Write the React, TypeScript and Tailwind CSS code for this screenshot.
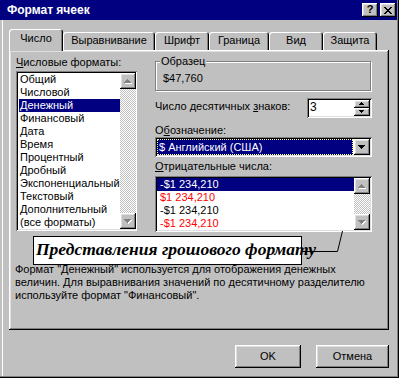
import React from 'react';

const raised = 'shadow-[inset_-1px_-1px_#000,inset_1px_1px_#fff,inset_-2px_-2px_#808080,inset_2px_2px_#dfdfdf]';
const sunken = 'shadow-[inset_1px_1px_#808080,inset_-1px_-1px_#fff,inset_2px_2px_#000,inset_-2px_-2px_#dfdfdf]';
const checker = 'bg-[image:repeating-conic-gradient(#c0c0c0_0_25%,#fff_0_50%)] bg-[length:2px_2px]';

const formats = [
    'Общий', 'Числовой', 'Денежный', 'Финансовый', 'Дата', 'Время', 'Процентный',
    'Дробный', 'Экспоненциальный', 'Текстовый', 'Дополнительный', '(все форматы)',
];

const negatives = [
    { text: '-$1 234,210', red: false },
    { text: '$1 234,210', red: true },
    { text: '-$1 234,210', red: false },
    { text: '-$1 234,210', red: true },
];

const tabs = [
    { label: 'Число', w: 'w-[54px]', active: true },
    { label: 'Выравнивание', w: 'w-[92px]' },
    { label: 'Шрифт', w: 'w-[54px]' },
    { label: 'Граница', w: 'w-[60px]' },
    { label: 'Вид', w: 'w-[54px]' },
    { label: 'Защита', w: 'w-[54px]' },
];

// pixel triangle, rows 1,3,5,7...
const Arrow = ({ dir, size = 4, disabled }: { dir: 'up' | 'down'; size?: number; disabled?: boolean }) => {
    const w = size * 2 - 1;
    const rows = Array.from({ length: size }, (_, i) => (dir === 'up' ? i : size - 1 - i));
    return (
        <svg width={w + 1} height={size + 1} viewBox={`0 0 ${w + 1} ${size + 1}`} shapeRendering="crispEdges">
            {disabled && rows.map((r, y) => (
                <rect key={'s' + y} x={size - 1 - r + 1} y={y + 1} width={r * 2 + 1} height={1} fill="#fff" />
            ))}
            {rows.map((r, y) => (
                <rect key={y} x={size - 1 - r} y={y} width={r * 2 + 1} height={1} fill={disabled ? '#808080' : '#000'} />
            ))}
        </svg>
    );
};

const ScrollBtn = ({ dir, disabled }: { dir: 'up' | 'down'; disabled?: boolean }) => (
    <div className={`w-[16px] h-[16px] bg-[#c0c0c0] flex items-center justify-center ${raised}`}>
        <Arrow dir={dir} disabled={disabled} />
    </div>
);

const Scrollbar = () => (
    <div className={`w-[16px] h-full flex flex-col ${checker}`}>
        <ScrollBtn dir="up" disabled />
        <div className="flex-1" />
        <ScrollBtn dir="down" disabled />
    </div>
);

const CloseGlyph = () => {
    const px: [number, number][] = [
        [0, 0], [1, 0], [6, 0], [7, 0],
        [1, 1], [2, 1], [5, 1], [6, 1],
        [2, 2], [3, 2], [4, 2], [5, 2],
        [3, 3], [4, 3],
        [2, 4], [3, 4], [4, 4], [5, 4],
        [1, 5], [2, 5], [5, 5], [6, 5],
        [0, 6], [1, 6], [6, 6], [7, 6],
    ];
    return (
        <svg width="8" height="7" viewBox="0 0 8 7" shapeRendering="crispEdges">
            {px.map(([x, y], i) => <rect key={i} x={x} y={y} width={1} height={1} fill="#000" />)}
        </svg>
    );
};

export default function App() {
    return (
        <div className="w-[399px] h-[378px] bg-[#c0c0c0] relative overflow-hidden text-[11px] leading-[13px] text-black font-['Liberation_Sans',Arial,sans-serif] shadow-[inset_-1px_-1px_#000,inset_-2px_-2px_#808080,inset_2px_0_#c0c0c0,inset_3px_0_#fff]">
            {/* title bar */}
            <div className="h-[20px] w-[397px] bg-[#000080] flex items-center pl-[7px] pr-[1px]">
                <span className="text-white font-bold text-[12px]">Формат ячеек</span>
                <div className="ml-auto flex gap-[2px]">
                    <div className={`w-[16px] h-[14px] bg-[#c0c0c0] flex items-center justify-center font-bold text-[11px] leading-none pb-[1px] ${raised}`}>?</div>
                    <div className={`w-[16px] h-[14px] bg-[#c0c0c0] flex items-center justify-center ${raised}`}>
                        <CloseGlyph />
                    </div>
                </div>
            </div>

            {/* tabs */}
            <div className="flex items-end h-[21px] mt-[9px] ml-[9px]">
                {tabs.map(t => (
                    <div
                        key={t.label}
                        className={`${t.w} flex items-center justify-center bg-[#c0c0c0] rounded-t-[3px] shadow-[inset_1px_1px_#fff,inset_-1px_0_#000,inset_-2px_0_#808080] ${t.active ? 'h-[22px] -mb-[1px] relative z-10 pb-[4px]' : 'h-[18px] pb-[1px]'}`}
                    >
                        {t.label}
                    </div>
                ))}
            </div>

            {/* panel */}
            <div className={`ml-[9px] w-[380px] h-[280px] pt-[6px] pl-[7px] ${raised}`}>
                <div className="flex gap-[18px]">
                    <div className="w-[121px]">
                        <div><span className="underline">Ч</span>исловые форматы:</div>
                        <div className={`mt-[2px] h-[160px] bg-white p-[2px] flex ${sunken}`}>
                            <div className="flex-1 pl-[1px]">
                                {formats.map(f => (
                                    <div key={f} className={`h-[13px] pl-[1px] whitespace-nowrap ${f === 'Денежный' ? 'bg-[#000080] text-white' : ''}`}>{f}</div>
                                ))}
                            </div>
                            <Scrollbar />
                        </div>
                    </div>

                    <div className="w-[217px]">
                        <div className="relative mt-[5px] w-[216px] h-[30px] border border-[#808080] shadow-[inset_1px_1px_#fff,1px_1px_#fff] pt-[10px] pl-[7px]">
                            <span className="absolute -top-[7px] left-[4px] px-[1px] bg-[#c0c0c0]">Образец</span>
                            $47,760
                        </div>

                        <div className="mt-[7px] flex justify-between">
                            <div className="mt-[2px]">Число десятичных <span className="underline">з</span>наков:</div>
                            <div className={`w-[65px] h-[20px] bg-white p-[2px] flex ${sunken}`}>
                                <div className="flex-1 pl-[1px] pt-[1px] text-[12px]">3</div>
                                <div className="flex flex-col">
                                    <div className={`w-[16px] h-[8px] bg-[#c0c0c0] flex items-center justify-center ${raised}`}>
                                        <Arrow dir="up" size={3} />
                                    </div>
                                    <div className={`w-[16px] h-[8px] bg-[#c0c0c0] flex items-center justify-center ${raised}`}>
                                        <Arrow dir="down" size={3} />
                                    </div>
                                </div>
                            </div>
                        </div>

                        <div className="mt-[6px]">О<span className="underline">б</span>означение:</div>
                        <div className={`h-[20px] bg-white p-[2px] flex ${sunken}`}>
                            <div className="flex-1 bg-[#000080] text-white border border-dotted border-[#ffff80] pl-[1px] leading-[14px] mr-[1px]">
                                $ Английский (США)
                            </div>
                            <div className={`w-[16px] h-[16px] bg-[#c0c0c0] flex items-center justify-center ${raised}`}>
                                <Arrow dir="down" />
                            </div>
                        </div>

                        <div className="mt-[3px]"><span className="underline">О</span>трицательные числа:</div>
                        <div className={`mt-[3px] h-[56px] bg-white p-[2px] flex ${sunken}`}>
                            <div className="flex-1">
                                {negatives.map((n, i) => (
                                    <div key={i} className={`h-[13px] pl-[3px] ${i === 0 ? 'bg-[#000080] text-white' : n.red ? 'text-[#ff0000]' : ''}`}>{n.text}</div>
                                ))}
                            </div>
                            <Scrollbar />
                        </div>
                    </div>
                </div>

                <p className="mt-[31px] -ml-[1px]">
                    Формат "Денежный" используется для отображения денежных<br />
                    величин. Для выравнивания значений по десятичному разделителю<br />
                    используйте формат "Финансовый".
                </p>
            </div>

            {/* buttons */}
            <div className="flex justify-end gap-[15px] mt-[15px] pr-[10px]">
                <button className={`w-[66px] h-[23px] bg-[#c0c0c0] ${raised}`}>OK</button>
                <button className={`w-[73px] h-[23px] bg-[#c0c0c0] ${raised}`}>Отмена</button>
            </div>

            {/* callout annotation */}
            <div className="absolute left-[33px] top-[236px] w-[269px] h-[29px] bg-white border border-black pl-[2px] font-['Liberation_Serif',serif] font-bold italic text-[17.5px] leading-[25px] whitespace-nowrap">
                Представления грошового формату
            </div>
            <svg className="absolute left-0 top-0 pointer-events-none" width="399" height="378">
                <polyline points="302,251.5 337.5,251.5 342.5,231" fill="none" stroke="#000" strokeWidth="1" />
            </svg>
        </div>
    );
}
